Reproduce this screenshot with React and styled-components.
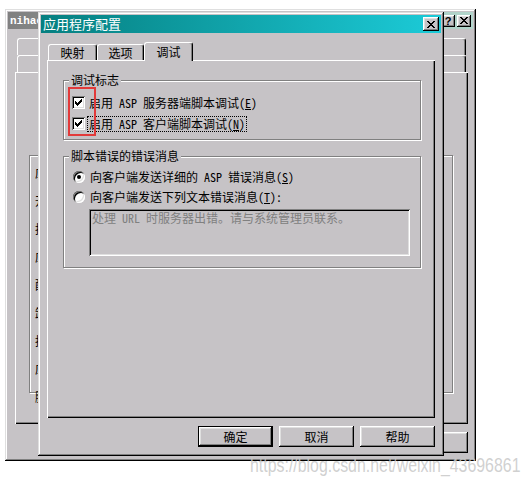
import React from "react";
import styled, { createGlobalStyle } from "styled-components";

const FACE = "#c6c3c6";
const CJK = `"Noto Sans Mono CJK SC", "Noto Sans CJK SC", sans-serif`;

const GlobalStyle = createGlobalStyle`
  html, body {
    margin: 0;
    padding: 0;
    background: #fff;
  }
  body {
    font-family: ${CJK};
    font-size: 12px;
    color: #000;
  }
`;

const Desktop = styled.div`
  position: relative;
  width: 529px;
  height: 483px;
  overflow: hidden;
  background: #fff;
`;

// each window is its own stacking context, later windows sit on top
const Window = styled.div`
  position: absolute;
  z-index: ${(p) => p.$z};
  left: ${(p) => p.$x}px;
  top: ${(p) => p.$y}px;
  width: ${(p) => p.$w}px;
  height: ${(p) => p.$h}px;
  box-sizing: border-box;
  padding: 3px;
  background: ${FACE};
  display: flex;
  flex-direction: column;
  box-shadow: inset -1px -1px #000, inset 1px 1px #dfdfdf, inset -2px -2px #808080, inset 2px 2px #fff;
`;

const TitleBar = styled.div`
  height: ${(p) => p.$h}px;
  flex: none;
  display: flex;
  align-items: center;
  padding: 0 2px;
  background: ${(p) =>
    p.$active ? "linear-gradient(to right, #067f80, #1ccbd8)" : "linear-gradient(to right, #808080, #b2d6cc)"};
`;

const TitleText = styled.span`
  flex: 1;
  color: #fff;
  font-size: ${(p) => (p.$mono ? "11px" : "13px")};
  font-family: ${(p) => (p.$mono ? `"Liberation Mono", monospace` : CJK)};
  font-weight: ${(p) => (p.$mono ? 700 : 400)};
  line-height: 16px;
  white-space: nowrap;
`;

const CaptionButton = styled.div`
  width: ${(p) => p.$w}px;
  height: ${(p) => p.$h}px;
  margin-left: 2px;
  flex: none;
  display: flex;
  align-items: center;
  justify-content: center;
  background: ${FACE};
  font: bold 11px "Liberation Sans", sans-serif;
  box-shadow: inset -1px -1px #000, inset 1px 1px #fff, inset -2px -2px #808080, inset 2px 2px #dfdfdf;
`;

const DialogBody = styled.div`
  flex: 1;
  display: flex;
  flex-direction: column;
  padding: ${(p) => p.$pad};
`;

const TabStrip = styled.div`
  height: 18px;
  display: flex;
  align-items: flex-end;
  padding-left: 1px;
`;

const Tab = styled.div`
  position: relative;
  z-index: ${(p) => (p.$active ? 2 : 0)};
  width: ${(p) => p.$w}px;
  height: ${(p) => (p.$active ? 19 : 16)}px;
  margin-bottom: ${(p) => (p.$active ? -1 : 0)}px;
  box-sizing: border-box;
  background: ${FACE};
  border-left: 1px solid #fff;
  border-top: 1px solid #fff;
  border-right: 1px solid #000;
  border-radius: 3px 3px 0 0;
  box-shadow: inset -1px 0 #808080;
  display: flex;
  align-items: center;
  justify-content: center;
  white-space: nowrap;
  line-height: 14px;
`;

const BackTabRow = styled.div`
  height: 17px;
  display: flex;
  align-items: flex-end;
  margin: 0 2px 0 2px;
`;

const BackTab = styled(Tab)`
  flex: 1;
  height: 17px;
`;

const TabPanel = styled.div`
  position: relative;
  z-index: 1;
  flex: none;
  height: ${(p) => p.$h}px;
  box-sizing: border-box;
  padding: ${(p) => p.$pad};
  background: ${FACE};
  box-shadow: inset 1px 1px #fff, inset -1px -1px #000, inset -2px -2px #808080;
`;

const Group = styled.fieldset`
  margin: 0 1px 9px 0;
  padding: ${(p) => p.$pad};
  min-width: 0;
  border: 1px solid #808080;
  box-shadow: inset 1px 1px #fff, 1px 1px #fff;
  height: ${(p) => (p.$h ? `${p.$h}px` : "auto")};
  box-sizing: border-box;
`;

const Legend = styled.legend`
  margin-left: -3px;
  padding: 0 2px;
  line-height: 14px;
  background: ${FACE};
`;

const OptionRow = styled.div`
  height: ${(p) => p.$h}px;
  display: flex;
  align-items: center;
  white-space: nowrap;
`;

const CheckBox = styled.span`
  width: 13px;
  height: 13px;
  flex: none;
  box-sizing: border-box;
  display: flex;
  align-items: center;
  justify-content: center;
  background: #fff;
  box-shadow: inset 1px 1px #808080, inset -1px -1px #fff, inset 2px 2px #000, inset -2px -2px #dfdfdf;
`;

const Radio = styled.span`
  width: 12px;
  height: 12px;
  margin-left: 1px;
  flex: none;
  border-radius: 50%;
  display: flex;
  align-items: center;
  justify-content: center;
  background: #fff;
  box-shadow: inset 1px 1px #808080, inset -1px -1px #fff, inset 2px 2px #000, inset -2px -2px #dfdfdf;

  &::after {
    content: "";
    width: 4px;
    height: 4px;
    border-radius: 50%;
    background: ${(p) => (p.$checked ? "#000" : "transparent")};
  }
`;

const OptionLabel = styled.span`
  margin-left: ${(p) => p.$gap}px;
  padding: 0 1px;
  line-height: 14px;
  outline: ${(p) => (p.$focus ? "1px dotted #000" : "none")};
  outline-offset: 0;
`;

const MessageBox = styled.div`
  width: 321px;
  height: 47px;
  margin: 2px 0 0 17px;
  box-sizing: border-box;
  padding: 2px 3px;
  color: #808080;
  line-height: 14px;
  white-space: nowrap;
  overflow: hidden;
  background: ${FACE};
  box-shadow: inset 1px 1px #808080, inset -1px -1px #fff, inset 2px 2px #000, inset -2px -2px #dfdfdf;
`;

const ButtonRow = styled.div`
  margin-top: 8px;
  display: flex;
  justify-content: flex-end;
  gap: 6px;
`;

const PushButton = styled.div`
  width: 75px;
  height: 21px;
  box-sizing: border-box;
  display: flex;
  align-items: center;
  justify-content: center;
  background: ${FACE};
  line-height: 14px;
  box-shadow: ${(p) =>
    p.$default
      ? "inset 0 0 0 1px #000, inset -2px -2px #000, inset 2px 2px #fff, inset -3px -3px #808080, inset 3px 3px #dfdfdf"
      : "inset -1px -1px #000, inset 1px 1px #fff, inset -2px -2px #808080, inset 2px 2px #dfdfdf"};
`;

const BackList = styled.div`
  display: flex;
  flex-direction: column;
  gap: 11px;
  padding: 8px 0 0 5px;
  white-space: nowrap;
`;

const RedMark = styled.div`
  position: absolute;
  left: 68px;
  top: 87px;
  width: 28px;
  height: 49px;
  box-sizing: border-box;
  border: 2px solid #e23a3a;
  z-index: 5;
  pointer-events: none;
`;

const Watermark = styled.div`
  position: absolute;
  left: 250px;
  top: 455px;
  font: 20px/20px "Liberation Sans", Arial, sans-serif;
  color: rgba(200, 200, 200, 0.85);
  transform: scaleX(0.795);
  transform-origin: left top;
  white-space: nowrap;
  z-index: 6;
`;

function Pixels({ rects, w, h }) {
  return (
    <svg width={w} height={h} viewBox={`0 0 ${w} ${h}`} shapeRendering="crispEdges">
      {rects.map(([x, y, rw], i) => (
        <rect key={i} x={x} y={y} width={rw} height={1} fill="#000" />
      ))}
    </svg>
  );
}

const CHECK = [[6, 0, 1], [5, 1, 2], [0, 2, 1], [4, 2, 3], [0, 3, 2], [3, 3, 3], [0, 4, 5], [1, 5, 3], [2, 6, 1]];
const CROSS = [[0, 0, 2], [6, 0, 2], [1, 1, 2], [5, 1, 2], [2, 2, 4], [3, 3, 2], [2, 4, 4], [1, 5, 2], [5, 5, 2], [0, 6, 2], [6, 6, 2]];

function CheckOption({ checked, focus, children }) {
  return (
    <OptionRow $h={21}>
      <CheckBox>{checked && <Pixels rects={CHECK} w={7} h={7} />}</CheckBox>
      <OptionLabel $gap={3} $focus={focus}>
        {children}
      </OptionLabel>
    </OptionRow>
  );
}

function RadioOption({ checked, children }) {
  return (
    <OptionRow $h={20}>
      <Radio $checked={checked} />
      <OptionLabel $gap={4}>{children}</OptionLabel>
    </OptionRow>
  );
}

function BackgroundWindow() {
  return (
    <Window $z={1} $x={5} $y={9} $w={471} $h={452}>
      <TitleBar $h={17}>
        <TitleText $mono>nihao</TitleText>
        <CaptionButton $w={14} $h={12}>?</CaptionButton>
        <CaptionButton $w={14} $h={12}>
          <Pixels rects={CROSS} w={8} h={7} />
        </CaptionButton>
      </TitleBar>
      <DialogBody $pad="9px 5px 5px 7px">
        <BackTabRow>
          <BackTab />
          <BackTab />
          <BackTab />
          <BackTab />
        </BackTabRow>
        <BackTabRow>
          <BackTab />
          <BackTab />
          <BackTab />
          <BackTab />
        </BackTabRow>
        <TabPanel $h={352} $pad="83px 14px 0 14px">
          <Group $pad="0" $h={238}>
            <BackList>
              <span>应用程序名</span>
              <span>开始位置</span>
              <span>执行权限</span>
              <span>应用程序保护</span>
              <span>配置</span>
              <span>卸载</span>
              <span>执行</span>
              <span>应用</span>
              <span>脚本</span>
            </BackList>
          </Group>
        </TabPanel>
        <ButtonRow>
          <PushButton />
          <PushButton />
          <PushButton />
        </ButtonRow>
      </DialogBody>
    </Window>
  );
}

function ConfigDialog() {
  return (
    <Window $z={2} $x={38} $y={12} $w={406} $h={444}>
      <TitleBar $active $h={18}>
        <TitleText>应用程序配置</TitleText>
        <CaptionButton $w={16} $h={14}>
          <Pixels rects={CROSS} w={8} h={7} />
        </CaptionButton>
      </TitleBar>
      <DialogBody $pad="9px 6px 6px 6px">
        <TabStrip>
          <Tab $w={49}>映射</Tab>
          <Tab $w={47}>选项</Tab>
          <Tab $w={49} $active>
            调试
          </Tab>
        </TabStrip>
        <TabPanel $h={358} $pad="13px 13px 0 16px">
          <Group $pad="5px 8px 5px 8px">
            <Legend>调试标志</Legend>
            <CheckOption checked>
              启用 ASP 服务器端脚本调试(<u>E</u>)
            </CheckOption>
            <CheckOption checked focus>
              启用 ASP 客户端脚本调试(<u>N</u>)
            </CheckOption>
          </Group>
          <Group $pad="4px 8px 11px 8px">
            <Legend>脚本错误的错误消息</Legend>
            <RadioOption checked>
              向客户端发送详细的 ASP 错误消息(<u>S</u>)
            </RadioOption>
            <RadioOption>
              向客户端发送下列文本错误消息(<u>T</u>):
            </RadioOption>
            <MessageBox>处理 URL 时服务器出错。请与系统管理员联系。</MessageBox>
          </Group>
        </TabPanel>
        <ButtonRow>
          <PushButton $default>确定</PushButton>
          <PushButton>取消</PushButton>
          <PushButton>帮助</PushButton>
        </ButtonRow>
      </DialogBody>
    </Window>
  );
}

export default function App() {
  return (
    <>
      <GlobalStyle />
      <Desktop>
        <BackgroundWindow />
        <ConfigDialog />
        <RedMark />
        <Watermark>https://blog.csdn.net/weixin_43696861</Watermark>
      </Desktop>
    </>
  );
}
